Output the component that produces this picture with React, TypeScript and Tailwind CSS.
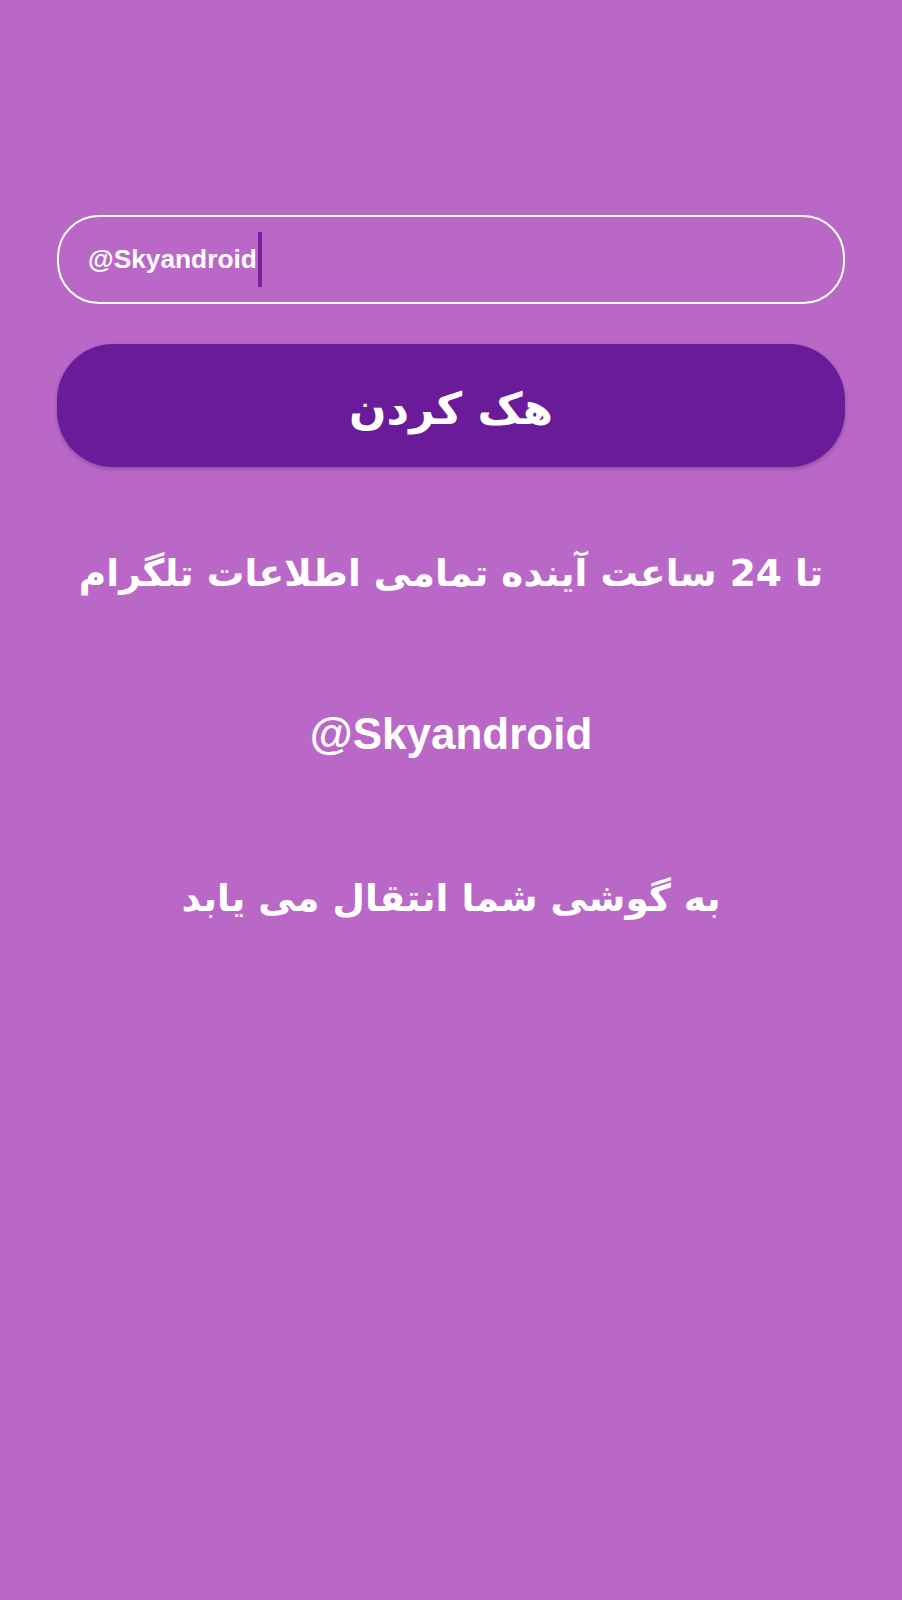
export default function App() {
  return (
    <div className="min-h-[1600px] w-full bg-[#ba68c8] px-[57px] pt-[215px] font-['DejaVu_Sans',sans-serif] text-white">
      {/* Username field */}
      <div className="flex h-[89px] items-center rounded-[42px] border-[2.5px] border-white pl-[29px]">
        <span className="font-['Liberation_Sans',sans-serif] text-[26.3px] font-bold leading-none">
          @Skyandroid
        </span>
        <span className="ml-[1px] h-[55px] w-[4px] bg-[#7b1fa2]" />
      </div>

      {/* Action button */}
      <button className="mt-[40px] flex h-[123px] w-full items-center justify-center rounded-[56px] bg-[#6a1b9a] shadow-[0_2px_4px_rgba(0,0,0,0.25)]">
        <span dir="rtl" className="mt-[6px] text-[44px] font-bold leading-none">
          هک کردن
        </span>
      </button>

      {/* Message */}
      <div className="flex flex-col items-center">
        <p dir="rtl" className="mt-[88px] whitespace-nowrap text-[37.5px] font-bold leading-none">
          تا 24 ساعت آینده تمامی اطلاعات تلگرام
        </p>
        <p className="mt-[119px] font-['Liberation_Sans',sans-serif] text-[44px] font-bold leading-none">
          @Skyandroid
        </p>
        <p dir="rtl" className="mt-[124px] whitespace-nowrap text-[37.5px] font-bold leading-none">
          به گوشی شما انتقال می یابد
        </p>
      </div>
    </div>
  )
}
